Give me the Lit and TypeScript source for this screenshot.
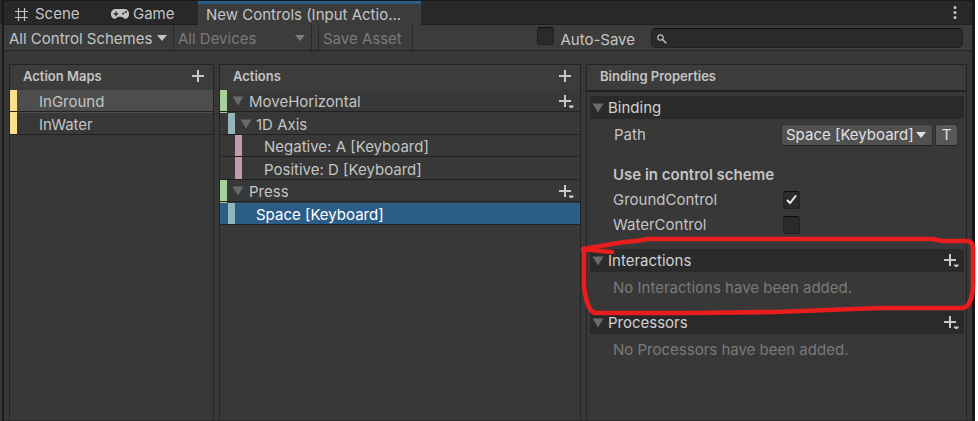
import { LitElement, html, svg, css, nothing } from "lit";
import { customElement } from "lit/decorators.js";
import { classMap } from "lit/directives/class-map.js";

interface Row {
  label: string;
  kind: "map" | "action" | "composite" | "part" | "binding";
  foldout?: boolean;
  add?: boolean;
  state?: "current" | "selected";
}

const maps: Row[] = [
  { label: "InGround", kind: "map", state: "current" },
  { label: "InWater", kind: "map" },
];

const actions: Row[] = [
  { label: "MoveHorizontal", kind: "action", foldout: true, add: true },
  { label: "1D Axis", kind: "composite", foldout: true },
  { label: "Negative: A [Keyboard]", kind: "part" },
  { label: "Positive: D [Keyboard]", kind: "part" },
  { label: "Press", kind: "action", foldout: true, add: true },
  { label: "Space [Keyboard]", kind: "binding", state: "selected" },
];

const schemes = [
  { name: "GroundControl", on: true },
  { name: "WaterControl", on: false },
];

const caret = html`<svg class="caret" width="10" height="6" viewBox="0 0 10 6" aria-hidden="true">
  <path d="M0 0H10L5 6Z" fill="currentColor" />
</svg>`;

const fold = html`<svg class="fold" width="12" height="10" viewBox="0 0 12 10" aria-hidden="true">
  <path d="M0.5 0.5H11.5L6 9.5Z" fill="#6a6a6a" />
</svg>`;

const plus = (menu: boolean) => html`<svg width="16" height="14" viewBox="0 0 16 14" aria-hidden="true">
  <path d="M0 5H5V0H7V5H12V7H7V12H5V7H0Z" fill="#c8c8c8" />
  ${menu ? svg`<path d="M10 10.5H14.6V11.6L13.2 13H11.4L10 11.6Z" fill="#c8c8c8" />` : nothing}
</svg>`;

@customElement("app-root")
export class AppRoot extends LitElement {
  static styles = css`
    :host {
      display: block;
      font-family: Inter, "Liberation Sans", sans-serif;
      font-size: 15px;
      line-height: 18px;
      color: #c4c4c4;
    }
    * {
      box-sizing: border-box;
    }
    button,
    select,
    input {
      font: inherit;
      color: inherit;
      margin: 0;
      padding: 0;
      border: 0;
      border-radius: 0;
      background: none;
      appearance: none;
      outline: none;
    }
    svg {
      display: block;
      flex: none;
    }
    .desk {
      min-height: 100vh;
      display: flex;
      padding-right: 3px;
      background: #fff;
    }
    .sliver {
      flex: 0 0 2px;
      background: #383838;
      border-top: 24px solid #282828;
    }
    .window {
      flex: 1;
      min-width: 0;
      display: flex;
      flex-direction: column;
      background: #383838;
      border: solid #191919;
      border-width: 1px 3px 0 2px;
      box-shadow: inset 0 -1px #2b2b2b;
    }
    .tabs {
      display: flex;
      height: 24px;
      background: #282828;
      box-shadow: inset 0 -1px #202020;
    }
    .tab {
      display: flex;
      align-items: center;
      padding: 2px 0 0 11px;
      gap: 7px;
      width: 96px;
      white-space: nowrap;
    }
    .tab.game {
      width: 98px;
      gap: 4px;
    }
    .tab.active {
      width: 223px;
      padding: 0 8px;
      background: #3c3c3c;
      border-top: 3px solid #2c5d87;
    }
    .more {
      margin-left: auto;
      width: 34px;
      display: grid;
      place-items: center;
    }
    .more svg {
      margin-bottom: 2px;
    }
    .toolbar {
      display: flex;
      height: 26px;
      background: #3c3c3c;
      border-bottom: 1px solid #232323;
    }
    .pick {
      position: relative;
      display: flex;
      align-items: center;
    }
    .pick select {
      width: 100%;
      height: 100%;
      opacity: 1;
    }
    .pick .caret {
      position: absolute;
      right: 6px;
      pointer-events: none;
    }
    .toolbar .pick {
      width: 170px;
      border-right: 1px solid #282828;
    }
    .toolbar .pick select {
      padding: 2px 0 0 5px;
    }
    .toolbar .pick.devices {
      width: 138px;
    }
    .toolbar .devices select {
      padding-left: 4px;
    }
    .off {
      color: #7a7a7a;
    }
    .toolbar .save {
      margin-left: 6px;
      width: 95px;
      padding: 2px 4px 0;
      text-align: left;
      border: solid #282828;
      border-width: 0 1px;
    }
    .auto {
      display: flex;
      align-items: flex-start;
      gap: 6px;
      margin-left: auto;
      padding-top: 2px;
    }
    .auto label {
      padding-top: 4px;
    }
    .box {
      flex: none;
      width: 17px;
      height: 18px;
      background: #2a2a2a;
      border: 1px solid #212121;
      border-top-color: #0d0d0d;
      border-radius: 3px;
    }
    .tick {
      position: relative;
      display: flex;
    }
    .tick svg {
      position: absolute;
      inset: 3px;
      pointer-events: none;
    }
    .search {
      position: relative;
      width: 312px;
      margin: 3px 9px 2px 16px;
      display: flex;
    }
    .search input {
      flex: 1;
      min-width: 0;
      padding: 0 8px 0 22px;
      background: #2a2a2a;
      border: 1px solid #212121;
      border-top-color: #0d0d0d;
      border-radius: 5px;
    }
    .search svg {
      position: absolute;
      left: 6px;
      top: 6px;
    }
    .panels {
      flex: 1;
      display: grid;
      grid-template-columns: minmax(0, 205fr) minmax(0, 362fr) minmax(0, 381fr);
      gap: 5px;
      padding: 13px 5px 0;
    }
    .panel {
      border: 1px solid #232323;
      border-bottom: 0;
    }
    .head {
      display: flex;
      align-items: flex-start;
      justify-content: space-between;
      height: 25px;
      padding: 0 5px 0 13px;
      background: #3c3c3c;
    }
    h2,
    h3 {
      margin: 0;
      font-size: 13px;
      font-weight: 600;
    }
    .head h2 {
      padding-top: 2px;
    }
    .head button {
      padding-top: 5px;
    }
    .rows {
      list-style: none;
      margin: 0;
      padding: 0;
      display: grid;
      grid-auto-rows: 23px 22px;
    }
    .row {
      position: relative;
      display: flex;
      align-items: center;
    }
    .row::after {
      content: "";
      position: absolute;
      inset: 21px 0 auto;
      height: 1px;
      background: #222;
    }
    .strip {
      width: 7px;
      align-self: stretch;
    }
    .row .name {
      flex: 1;
      align-self: flex-start;
      line-height: 23px;
    }
    .row .fold {
      margin: 0 5px 1px;
    }
    .row button {
      padding-right: 5px;
    }
    .map .strip {
      background: #ffe08a;
    }
    .map .name {
      padding-left: 22px;
    }
    .action .strip {
      background: #a8d197;
    }
    .composite,
    .binding {
      padding-left: 8px;
    }
    .composite .strip,
    .binding .strip {
      background: #92b6bb;
    }
    .binding .name {
      padding-left: 21px;
    }
    .composite .fold {
      margin-right: 4px;
    }
    .part {
      padding-left: 15px;
    }
    .part .strip {
      background: #c796b1;
    }
    .part .name {
      padding-left: 22px;
    }
    .current {
      background: #4d4d4d;
    }
    .selected {
      background: #2c5d87;
      color: #fff;
    }
    .sections {
      border-top: 2px solid #232323;
      padding: 4px 2px 0 3px;
    }
    .bar {
      display: flex;
      align-items: center;
      height: 23px;
      padding: 0 4px 0 2px;
      background: #2a2a2a;
      color: #d2d2d2;
    }
    .bar h2 {
      flex: 1;
      padding-left: 4px;
      font-size: 15px;
      font-weight: 400;
    }
    .field {
      display: grid;
      grid-template-columns: 170px 1fr;
      align-items: center;
      height: 25px;
      padding-left: 24px;
    }
    .path {
      grid-template-columns: 1fr 152px 23px;
      column-gap: 2px;
      height: 31px;
      padding-right: 6px;
    }
    .path .pick,
    .path button {
      height: 22px;
      background: #515151;
      border: 1px solid #303030;
      border-bottom-color: #242424;
      border-radius: 3px;
      color: #e0e0e0;
    }
    .path .pick select {
      padding-left: 4px;
    }
    .path button {
      background: #585858;
    }
    h3 {
      padding: 16px 0 3px 23px;
      font-size: 15px;
    }
    .field.scheme {
      padding-left: 23px;
    }
    .noted {
      position: relative;
      margin-top: 12px;
    }
    .noted .ink {
      position: absolute;
      left: -10px;
      top: -13px;
      overflow: visible;
      pointer-events: none;
    }
    .none {
      margin: 0;
      height: 39px;
      padding: 7px 0 0 23px;
      color: #7a7a7a;
    }
  `;

  private row(r: Row) {
    return html`<li
      class=${classMap({
        row: true,
        [r.kind]: true,
        current: r.state === "current",
        selected: r.state === "selected",
      })}
    >
      <span class="strip"></span>${r.foldout ? fold : nothing}<span class="name">${r.label}</span>
      ${r.add ? html`<button aria-label="Add binding">${plus(true)}</button>` : nothing}
    </li>`;
  }

  private check(id: string, on: boolean) {
    return html`<span class="tick">
      <input class="box" id=${id} type="checkbox" .checked=${on} />
      ${on
        ? html`<svg width="11" height="11" viewBox="0 0 11 11" aria-hidden="true">
            <path d="M1 6L4 9L10 1.5" fill="none" stroke="#eee" stroke-width="2" />
          </svg>`
        : nothing}
    </span>`;
  }

  render() {
    return html`<div class="desk">
      <div class="sliver"></div>
      <main class="window">
        <div class="tabs" role="tablist">
          <button class="tab" role="tab">
            <svg width="13" height="13" viewBox="0 0 13 13" aria-hidden="true">
              <path d="M3.5 0V13M9.5 0V13M0 3.5H13M0 9.5H13" stroke="#c4c4c4" stroke-width="1.2" />
            </svg>
            Scene
          </button>
          <button class="tab game" role="tab">
            <svg width="18" height="10" viewBox="0 0 18 10" aria-hidden="true">
              <path
                fill="#c4c4c4"
                fill-rule="evenodd"
                d="M4.5 0H13.5A4.5 4.7 0 0 1 18 5A4.3 4.6 0 0 1 14 9.7C12.3 9.7 11.6 7.8 10.5 7.8H7.5C6.4 7.8 5.7 9.7 4 9.7A4.3 4.6 0 0 1 0 5A4.5 4.7 0 0 1 4.5 0ZM4.2 2.5V4.2H2.5V5.6H4.2V7.3H5.6V5.6H7.3V4.2H5.6V2.5ZM11.2 4.6a1.1 1.1 0 1 0 2.2 0a1.1 1.1 0 1 0-2.2 0ZM13.8 3a1.1 1.1 0 1 0 2.2 0a1.1 1.1 0 1 0-2.2 0Z"
              />
            </svg>
            Game
          </button>
          <button class="tab active" role="tab" aria-selected="true">New Controls (Input Actio...</button>
          <button class="more" aria-label="Window menu">
            <svg width="4" height="13" viewBox="0 0 4 13" aria-hidden="true">
              <path
                fill="#c8c8c8"
                d="M0.5 1.5a1.5 1.5 0 1 0 3 0a1.5 1.5 0 1 0-3 0M0.5 6.5a1.5 1.5 0 1 0 3 0a1.5 1.5 0 1 0-3 0M0.5 11.5a1.5 1.5 0 1 0 3 0a1.5 1.5 0 1 0-3 0"
              />
            </svg>
          </button>
        </div>
        <div class="toolbar">
          <div class="pick">
            <select aria-label="Control scheme"><option>All Control Schemes</option></select>${caret}
          </div>
          <div class="pick devices off">
            <select aria-label="Devices" disabled><option>All Devices</option></select>${caret}
          </div>
          <button class="save off" disabled>Save Asset</button>
          <div class="auto">
            ${this.check("auto", false)}
            <label for="auto">Auto-Save</label>
          </div>
          <div class="search">
            <input type="search" aria-label="Search" />
            <svg width="10" height="10" viewBox="0 0 10 10" aria-hidden="true">
              <circle cx="3.5" cy="3.5" r="2.7" fill="none" stroke="#c4c4c4" stroke-width="1.2" />
              <path d="M5.5 5.5L9.3 9.3" stroke="#c4c4c4" stroke-width="1.5" />
            </svg>
          </div>
        </div>
        <div class="panels">
          <section class="panel">
            <div class="head">
              <h2>Action Maps</h2>
              <button aria-label="Add action map">${plus(false)}</button>
            </div>
            <ul class="rows">${maps.map((r) => this.row(r))}</ul>
          </section>
          <section class="panel">
            <div class="head">
              <h2>Actions</h2>
              <button aria-label="Add action">${plus(false)}</button>
            </div>
            <ul class="rows">${actions.map((r) => this.row(r))}</ul>
          </section>
          <section class="panel">
            <div class="head"><h2>Binding Properties</h2></div>
            <div class="sections">
              <div class="bar">${fold}<h2>Binding</h2></div>
              <div class="field path">
                <label for="path">Path</label>
                <div class="pick">
                  <select id="path"><option>Space [Keyboard]</option></select>${caret}
                </div>
                <button aria-label="Edit path as text">T</button>
              </div>
              <h3>Use in control scheme</h3>
              ${schemes.map(
                (s) => html`<div class="field scheme">
                  <label for=${s.name}>${s.name}</label>${this.check(s.name, s.on)}
                </div>`
              )}
              <div class="noted">
                <div class="bar">
                  ${fold}
                  <h2>Interactions</h2>
                  <button aria-label="Add interaction">${plus(true)}</button>
                </div>
                <p class="none">No Interactions have been added.</p>
                <svg class="ink" width="395" height="80" viewBox="580 236 395 80" aria-hidden="true">
                  <path
                    d="M612 252L600 251L583 249L624 242L636 241L648 239H932L942 241H966C971 241 973 244 973 248V284C973 298 969 308 962 308H880L775 312L690 313H596C587 313 584 290 584 284V249"
                    fill="none"
                    stroke="#e81d1d"
                    stroke-width="4.6"
                    stroke-linecap="round"
                    stroke-linejoin="round"
                  />
                </svg>
              </div>
              <div class="bar">
                ${fold}
                <h2>Processors</h2>
                <button aria-label="Add processor">${plus(true)}</button>
              </div>
              <p class="none">No Processors have been added.</p>
            </div>
          </section>
        </div>
      </main>
    </div>`;
  }
}
